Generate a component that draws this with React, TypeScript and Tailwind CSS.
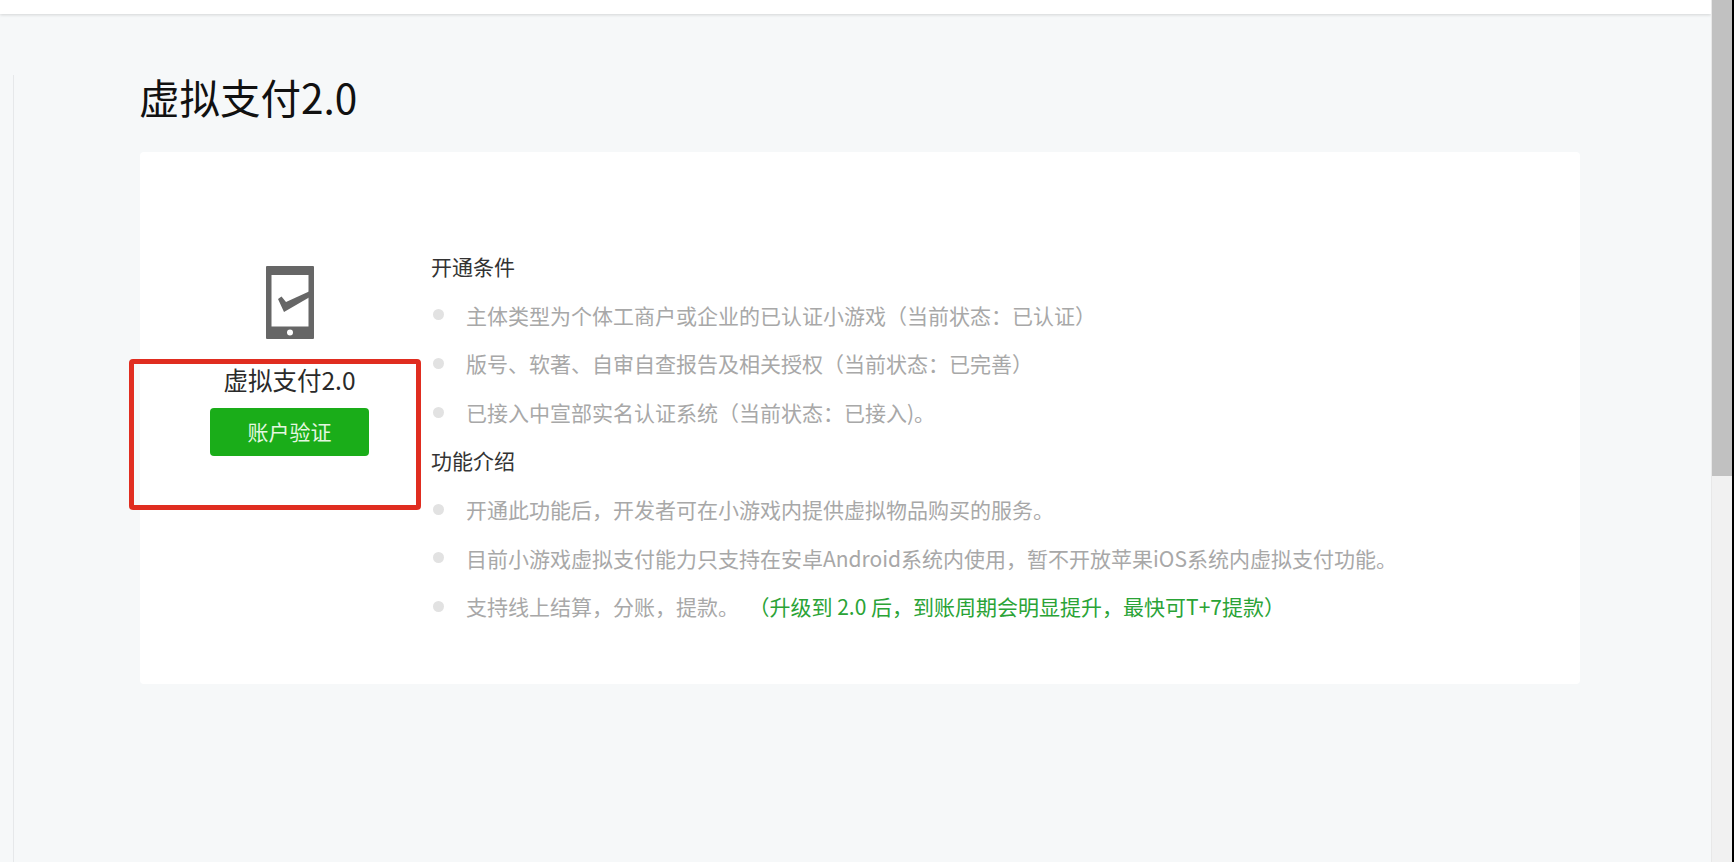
function PhoneCheck() {
  return (
    <svg width="48" height="73" viewBox="0 0 48 73" className="block">
      <path
        fill="#666666"
        fillRule="evenodd"
        d="M1 0h46a1 1 0 0 1 1 1v71a1 1 0 0 1-1 1H1a1 1 0 0 1-1-1V1a1 1 0 0 1 1-1zM5.500 9v51.500h37V9zM24 63.500a3 3 0 1 0 0 6 3 3 0 0 0 0-6z"
      />
      <path fill="#666666" d="M12 33l3.500-2.500 4.500 5.500 23-10.500v6L18 46z" />
    </svg>
  );
}

const conditions = [
  '主体类型为个体工商户或企业的已认证小游戏（当前状态：已认证）',
  '版号、软著、自审自查报告及相关授权（当前状态：已完善）',
  '已接入中宣部实名认证系统（当前状态：已接入)。',
];

const features = [
  '开通此功能后，开发者可在小游戏内提供虚拟物品购买的服务。',
  '目前小游戏虚拟支付能力只支持在安卓Android系统内使用，暂不开放苹果iOS系统内虚拟支付功能。',
];

function Row({ children }: { children: React.ReactNode }) {
  return (
    <li className="flex items-center text-[#a8a8a8]">
      <span className="ml-[2px] mr-[22px] h-[11px] w-[11px] shrink-0 rounded-full bg-[#e2e2e2]" />
      <span className="whitespace-pre">{children}</span>
    </li>
  );
}

export default function App() {
  return (
    <div className="flex h-[862px] w-[1734px] overflow-hidden bg-[#f6f8f9] font-['Noto_Sans_CJK_SC','Noto_Sans',sans-serif]">
      <div className="flex min-w-0 flex-1 flex-col">
        <div className="h-[14px] shrink-0 bg-white shadow-[0_1px_3px_rgba(0,0,0,0.14)]" />
        <div className="flex flex-1 pl-[13px] pt-[61px]">
          <div className="flex-1 border-l border-[#e6e8ea] pl-[125px]">
            <h1 className="-mt-[3px] h-[80px] text-[40.500px] leading-[50px] font-normal text-[#111111]">虚拟支付2.0</h1>
            <div className="relative ml-[1px] flex h-[532px] w-[1440px] rounded-[4px] bg-white">
              <div className="flex w-[291px] shrink-0 flex-col items-center pl-[8px] pt-[114px]">
                <PhoneCheck />
                <div className="mt-[25px] text-[24.500px] leading-[32px] text-[#2a2a2a]">虚拟支付2.0</div>
                <button className="mt-[12px] h-[48px] w-[159px] rounded-[4px] bg-[#1aad19] text-[21px] text-[#e4f7e0]">
                  账户验证
                </button>
              </div>
              <div className="pt-[90px] text-[21px] leading-[48.600px]">
                <div className="text-[#333333]">开通条件</div>
                <ul>
                  {conditions.map((text) => (
                    <Row key={text}>{text}</Row>
                  ))}
                </ul>
                <div className="text-[#333333]">功能介绍</div>
                <ul>
                  {features.map((text) => (
                    <Row key={text}>{text}</Row>
                  ))}
                  <Row>
                    支持线上结算，分账，提款。
                    <span className="ml-[20px] text-[#2aa336]">（升级到 2.0 后，到账周期会明显提升，最快可T+7提款）</span>
                  </Row>
                </ul>
              </div>
              {/* red box drawn over the screenshot */}
              <div className="absolute left-[-11px] top-[207px] h-[151px] w-[292px] rounded-[4px] border-[5px] border-[#e02d20]" />
            </div>
          </div>
        </div>
      </div>
      <div className="flex w-[23px] shrink-0 flex-col border-l border-r-2 border-l-[#e8e8e8] border-r-black bg-[#f1f1f1]">
        <div className="h-[476px] bg-[#c1c1c1]" />
      </div>
    </div>
  );
}
